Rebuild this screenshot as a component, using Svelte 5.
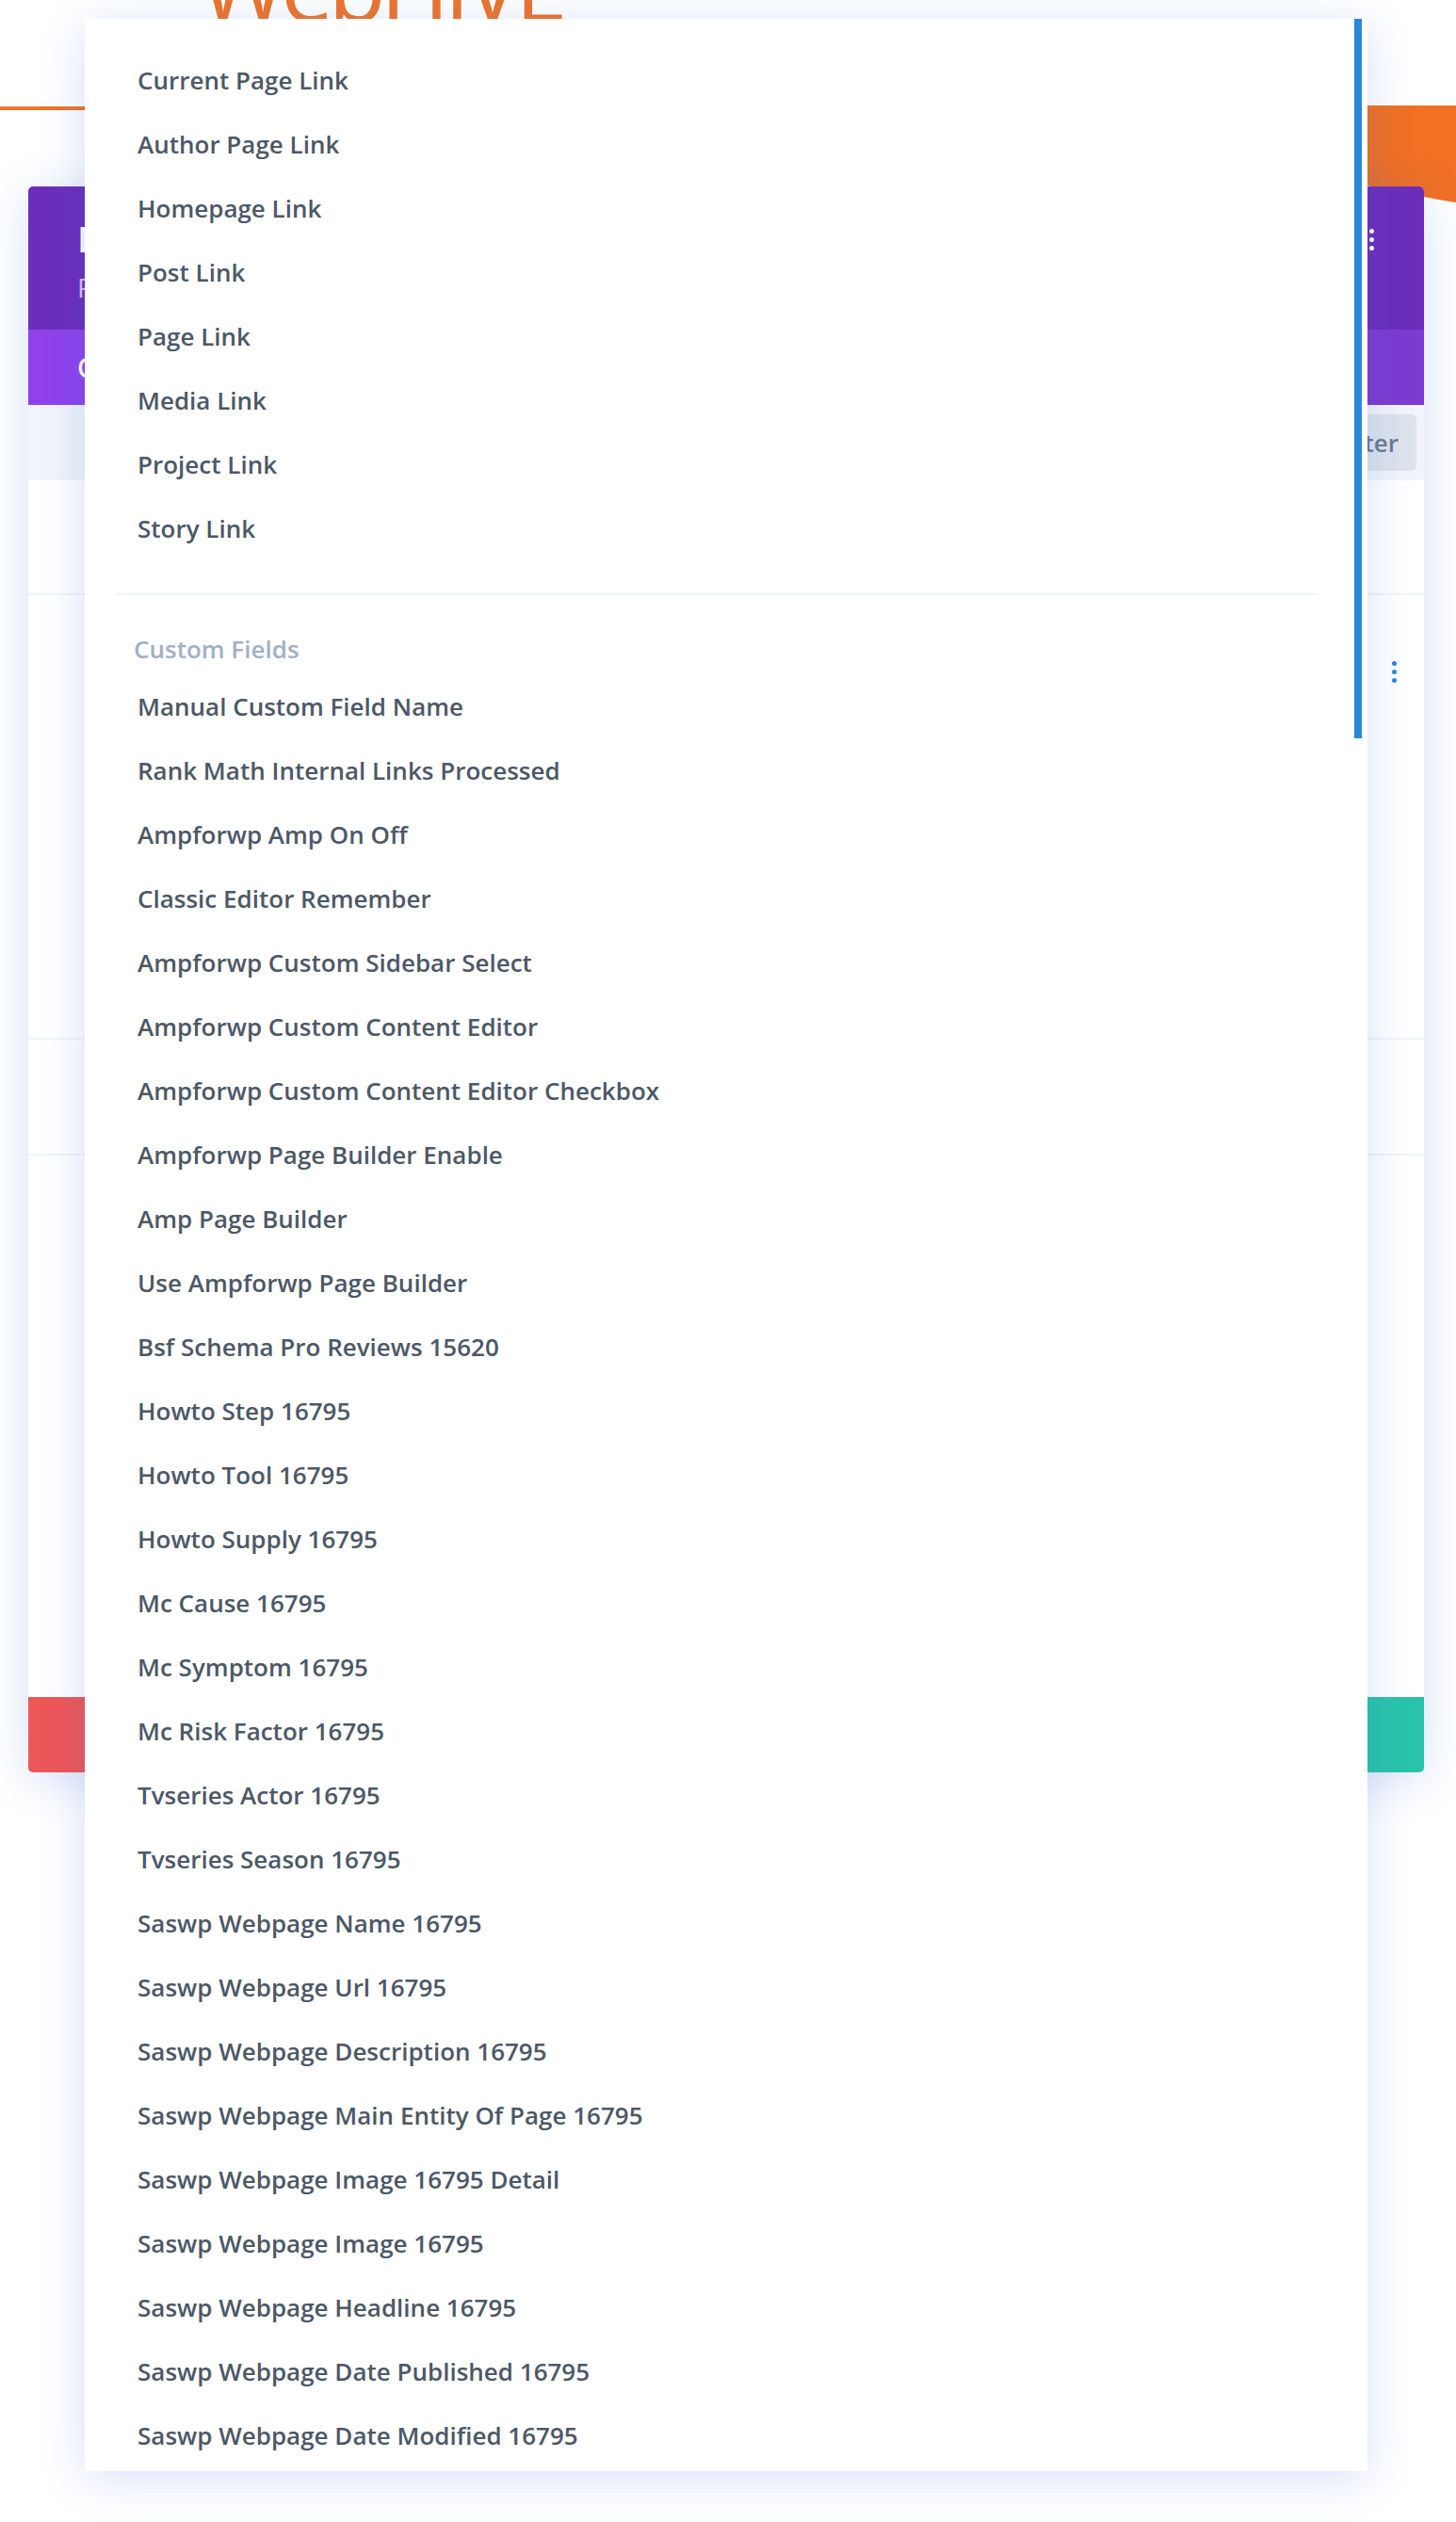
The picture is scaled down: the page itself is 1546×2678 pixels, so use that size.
<script>
  const links = [
    "Current Page Link",
    "Author Page Link",
    "Homepage Link",
    "Post Link",
    "Page Link",
    "Media Link",
    "Project Link",
    "Story Link",
  ];

  const fields = [
    "Manual Custom Field Name",
    "Rank Math Internal Links Processed",
    "Ampforwp Amp On Off",
    "Classic Editor Remember",
    "Ampforwp Custom Sidebar Select",
    "Ampforwp Custom Content Editor",
    "Ampforwp Custom Content Editor Checkbox",
    "Ampforwp Page Builder Enable",
    "Amp Page Builder",
    "Use Ampforwp Page Builder",
    "Bsf Schema Pro Reviews 15620",
    "Howto Step 16795",
    "Howto Tool 16795",
    "Howto Supply 16795",
    "Mc Cause 16795",
    "Mc Symptom 16795",
    "Mc Risk Factor 16795",
    "Tvseries Actor 16795",
    "Tvseries Season 16795",
    "Saswp Webpage Name 16795",
    "Saswp Webpage Url 16795",
    "Saswp Webpage Description 16795",
    "Saswp Webpage Main Entity Of Page 16795",
    "Saswp Webpage Image 16795 Detail",
    "Saswp Webpage Image 16795",
    "Saswp Webpage Headline 16795",
    "Saswp Webpage Date Published 16795",
    "Saswp Webpage Date Modified 16795",
  ];
</script>

<div class="page">
  <div class="logo">WebHIVE</div>
  <div class="rule"></div>
  <svg class="swoosh" width="200" height="110" viewBox="0 0 200 110">
    <path d="M0 0H200V103C150 95 100 82 0 68Z" fill="#f17023" />
  </svg>

  <section class="card">
    <header class="card-head">
      <div>
        <h1>Blog Settings</h1>
        <p>Preset: Default</p>
      </div>
      <span class="dots white"><i></i><i></i><i></i></span>
    </header>

    <nav class="tabs">
      <span class="tab active">Content</span>
      <span class="tab">Design</span>
      <span class="tab">Advanced</span>
    </nav>

    <div class="search">
      <span class="filter">Filter</span>
    </div>

    <div class="row short"></div>
    <div class="row tall">
      <span class="dots blue"><i></i><i></i><i></i></span>
    </div>
    <div class="row mid"></div>
    <div class="row rest"></div>

    <footer class="card-foot">
      <span class="cancel"></span>
      <span class="save"></span>
    </footer>
  </section>

  <div class="popup">
    <div class="bar"></div>
    <ul class="links">
      {#each links as link}
        <li>{link}</li>
      {/each}
    </ul>
    <h2>Custom Fields</h2>
    <ul>
      {#each fields as field}
        <li>{field}</li>
      {/each}
    </ul>
  </div>
</div>

<style>
  :global(body) {
    background: #fff;
    font-family: "Open Sans", "Noto Sans", sans-serif;
  }

  .page {
    position: relative;
    height: 2678px;
    overflow: hidden;
    padding: 198px 34px 0 30px;
    box-sizing: border-box;
  }

  .logo {
    position: absolute;
    top: -66px;
    left: 212px;
    font-size: 100px;
    font-weight: 500;
    line-height: 100px;
    letter-spacing: -6px;
    color: #ed752c;
    white-space: nowrap;
  }

  .rule {
    position: absolute;
    top: 113px;
    left: 0;
    width: 200px;
    height: 4px;
    background: #ed752c;
  }

  .swoosh {
    position: absolute;
    top: 112px;
    right: 0;
  }

  .card {
    position: relative;
    display: flex;
    flex-direction: column;
    height: 1684px;
    border-radius: 5px;
    background: #fff;
    box-shadow: 0 8px 50px rgba(50, 100, 220, 0.2);
  }

  .card-head {
    display: flex;
    justify-content: space-between;
    height: 152px;
    padding: 30px 53px 0 52px;
    box-sizing: border-box;
    border-radius: 5px 5px 0 0;
    background: #6c2eb9;
    color: #fff;
  }

  h1 {
    margin: 0;
    font-size: 38px;
    font-weight: 600;
    line-height: 50px;
  }

  .card-head p {
    margin: 8px 0 0;
    font-size: 28px;
    line-height: 38px;
    color: #d9c4f5;
  }

  .dots {
    display: flex;
    flex-direction: column;
    gap: 4px;
  }

  .dots i {
    width: 5px;
    height: 5px;
    border-radius: 50%;
    background: currentColor;
  }

  .dots.white {
    margin-top: 15px;
    color: #fff;
  }

  .dots.blue {
    margin-top: 70px;
    color: #2b87da;
  }

  .tabs {
    display: flex;
    height: 80px;
    background: #7e3bd0;
    color: #fff;
    font-size: 28px;
    font-weight: 600;
    line-height: 80px;
  }

  .tab {
    padding: 0 30px;
  }

  .tab.active {
    padding-left: 52px;
    background: #8f42ec;
  }

  .search {
    display: flex;
    justify-content: flex-end;
    height: 80px;
    padding: 10px 8px;
    box-sizing: border-box;
    background: #f1f5f9;
  }

  .filter {
    padding: 0 19px;
    border-radius: 5px;
    background: #dde3ec;
    color: #6b7a8c;
    font-size: 26px;
    font-weight: 600;
    line-height: 60px;
  }

  .row {
    display: flex;
    justify-content: flex-end;
    padding-right: 29px;
    border-bottom: 2px solid #f1f5f9;
    box-sizing: border-box;
  }

  .short {
    height: 122px;
  }

  .tall {
    height: 472px;
  }

  .mid {
    height: 123px;
  }

  .rest {
    flex: 1;
    border-bottom: 0;
  }

  .card-foot {
    display: flex;
    height: 80px;
    border-radius: 0 0 5px 5px;
    overflow: hidden;
  }

  .cancel {
    flex: 1;
    background: #ee5757;
  }

  .save {
    flex: 1;
    background: #29c4a9;
  }

  .popup {
    position: absolute;
    top: 20px;
    left: 90px;
    width: 1362px;
    height: 2604px;
    padding-top: 31px;
    box-sizing: border-box;
    overflow: hidden;
    border-radius: 3px;
    background: #fff;
    box-shadow: 0 8px 50px rgba(50, 100, 220, 0.2);
  }

  .bar {
    position: absolute;
    top: 0;
    right: 6px;
    width: 8px;
    height: 764px;
    background: #2b87da;
  }

  ul {
    margin: 0;
    padding: 0;
    list-style: none;
  }

  li {
    padding-left: 56px;
    font-size: 26px;
    font-weight: 600;
    line-height: 68px;
    color: #4c5866;
  }

  .links {
    margin: 0 52px 0 32px;
    padding-bottom: 35px;
    border-bottom: 2px solid #f1f5f9;
  }

  .links li {
    padding-left: 24px;
  }

  h2 {
    margin: 32px 0 2px 52px;
    font-size: 26px;
    font-weight: 600;
    line-height: 50px;
    color: #a3b0c2;
  }
</style>
